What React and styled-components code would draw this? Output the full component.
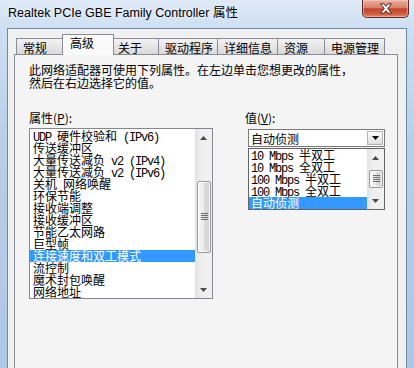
import React from 'react';
import styled, { createGlobalStyle } from 'styled-components';

const Global = createGlobalStyle`
  html, body { margin: 0; padding: 0; }
  body {
    width: 414px; height: 368px; overflow: hidden;
    background: #c4d7ee;
    font-family: "Noto Sans CJK SC", sans-serif;
  }
`;

const CJK = `"Noto Sans CJK SC", "Noto Sans", sans-serif`;

const Window = styled.div`
  width: 414px; height: 368px; overflow: hidden;
  display: flex; flex-direction: column;
  background: linear-gradient(to bottom, #dfeaf7 0px, #cddff2 28px, #b9cfe9 140px, #aec7e4 368px);
`;

const TitleBar = styled.div`
  height: 28px; flex-shrink: 0;
  display: flex; align-items: flex-start; justify-content: space-between;
`;

const Title = styled.div`
  padding: 5px 0 0 8px;
  font-family: "Liberation Sans", ${CJK};
  font-size: 12.5px; line-height: 16px; color: #000;
  text-shadow: 0 0 6px rgba(255,255,255,0.9);
`;

const CloseButton = styled.div`
  width: 47px; height: 18px; margin-right: 5px; box-sizing: border-box;
  border: 1px solid #5e2a24; border-top: none; border-radius: 0 0 5px 5px;
  background: linear-gradient(to bottom, #eab0a2 0%, #d9806b 45%, #c4442c 52%, #cf5a3e 80%, #dd8a6e 100%);
  box-shadow: inset 0 0 0 1px rgba(255,220,210,0.45);
  display: flex; align-items: center; justify-content: center;
`;

const Frame = styled.div`
  flex: 1; min-height: 0; display: flex;
  padding: 0 7px;
  border-left: 2px solid #9fbbdf;
  border-right: 2px solid #9fbbdf;
  margin: 0 -2px;
`;

const Client = styled.div`
  flex: 1; display: flex; flex-direction: column;
  background: #f0f0f0;
  border: 1px solid #6f87a6; border-bottom: none;
  padding: 5px 8px 0 6px;
`;

const TabRow = styled.div`
  display: flex; align-items: flex-end;
  height: 21px; padding-left: 2px;
  margin-bottom: -1px; position: relative; z-index: 1;
`;

const Tab = styled.div`
  box-sizing: border-box;
  width: ${p => p.$w}px;
  height: ${p => (p.$active ? 21 : 17)}px;
  margin: 0 ${p => (p.$active ? -2 : 0)}px;
  padding: ${p => (p.$active ? '1px 0 0 7px' : '2px 0 0 6px')};
  border: 1px solid #898c95;
  border-bottom: ${p => (p.$active ? 'none' : '1px solid #898c95')};
  border-left: ${p => (p.$first || p.$active ? '1px solid #898c95' : 'none')};
  background: ${p => (p.$active ? '#fafafa' : 'linear-gradient(to bottom, #f3f3f3, #e6e6e6 50%, #dadada)')};
  position: relative; z-index: ${p => (p.$active ? 2 : 1)};
  font-family: ${CJK}; font-size: 12px; line-height: 13px; color: #000;
  white-space: nowrap;
`;

const Panel = styled.div`
  height: 340px; flex-shrink: 0;
  border: 1px solid #898c95;
  background: #f4f4f4;
  padding: 8px 0 0 14px;
  font-family: ${CJK}; font-size: 12px; color: #000;
`;

const Description = styled.p`
  margin: 0; font-size: 12px; line-height: 13px; white-space: nowrap;
`;

const Columns = styled.div`
  display: flex; gap: 32px; margin-top: 23px;
`;

const Column = styled.div`
  display: flex; flex-direction: column;
  width: ${p => p.$w}px;
`;

const Label = styled.div`
  font-size: 12px; line-height: 12px;
  margin-bottom: ${p => p.$mb}px;
  u { text-decoration: underline; text-underline-offset: 1px; }
`;

const ListBox = styled.div`
  box-sizing: border-box;
  height: ${p => p.$h}px;
  border: 1px solid ${p => p.$border};
  background: #fff;
  display: flex;
`;

const Items = styled.div`
  flex: 1; min-width: 0; overflow: hidden;
  padding-top: ${p => p.$pt}px;
`;

const Item = styled.div`
  height: 12px; line-height: 12px; font-size: 12px;
  padding-left: ${p => p.$pl}px;
  white-space: nowrap;
  background: ${p => (p.$sel ? '#3399ff' : 'transparent')};
  color: ${p => (p.$sel ? '#fff' : '#000')};
`;

const Latin = styled.span`
  font-family: "Liberation Mono", monospace;
  font-size: 12px; letter-spacing: -1.2px;
`;

const ScrollBar = styled.div`
  width: 17px; flex-shrink: 0;
  display: flex; flex-direction: column;
  background: linear-gradient(to right, #e2e2e2, #efefef 35%, #f2f2f2);
`;

const ScrollArrow = styled.div`
  height: 17px; flex-shrink: 0;
  display: flex; align-items: center; justify-content: center;
`;

const ScrollTrack = styled.div`
  flex: 1; min-height: 0;
`;

const ScrollThumb = styled.div`
  box-sizing: border-box;
  margin: ${p => p.$offset}px 1px 0 2px;
  height: ${p => p.$size}px;
  border: 1px solid #9a9a9a; border-radius: 2px;
  background: linear-gradient(to right, #f6f6f6, #ececec 45%, #dcdcdc 55%, #d2d2d2);
  box-shadow: inset 0 0 0 1px rgba(255,255,255,0.7);
  display: flex; align-items: center; justify-content: center;
`;

const ComboWrap = styled.div`
  position: relative;
  margin-left: 3px;
  width: 137px;
`;

const Combo = styled.div`
  box-sizing: border-box;
  height: 18px;
  border: 1px solid #7a7a7a;
  background: #fff;
  display: flex; align-items: stretch;
`;

const ComboText = styled.div`
  flex: 1; padding: 2px 0 0 2px;
  font-size: 12px; line-height: 13px;
`;

const ComboButton = styled.div`
  box-sizing: border-box;
  width: 16px; margin: 1px;
  border: 1px solid #b4b4b4;
  background: linear-gradient(to bottom, #fdfdfd, #ececec 50%, #dedede);
  display: flex; align-items: center; justify-content: center;
`;

const DropList = styled.div`
  position: absolute; left: 0; top: calc(100% + 1px);
  width: 137px;
`;

const ArrowIcon = ({ up, color = '#4a4a4a', w = 7, h = 4 }) => (
  <svg width={w} height={h} viewBox={`0 0 ${w} ${h}`}>
    <path d={up ? `M0 ${h} L${w / 2} 0 L${w} ${h} Z` : `M0 0 L${w / 2} ${h} L${w} 0 Z`} fill={color} />
  </svg>
);

const Grip = () => (
  <svg width="7" height="8" viewBox="0 0 7 8">
    {[0, 2, 4, 6].map(y => (
      <rect key={y} x="0" y={y} width="7" height="1" fill="#6b6b6b" />
    ))}
  </svg>
);

const CloseIcon = () => (
  <svg width="14" height="11" viewBox="0 0 14 11">
    <path
      d="M1.5 0.8 L5 0.8 L7 3.3 L9 0.8 L12.5 0.8 L8.8 5.5 L12.5 10.2 L9 10.2 L7 7.7 L5 10.2 L1.5 10.2 L5.2 5.5 Z"
      fill="#fff" stroke="#3d1712" strokeWidth="0.9" strokeLinejoin="round"
    />
  </svg>
);

const Mixed = ({ text }) => {
  const parts = text.split(/([\x20-\x7e]+)/).filter(Boolean);
  return parts.map((p, i) => (/^[\x20-\x7e]+$/.test(p) ? <Latin key={i}>{p.replace(/ /g, '\u00a0')}</Latin> : <span key={i}>{p}</span>));
};

const Scroll = ({ thumbOffset, thumbSize }) => (
  <ScrollBar>
    <ScrollArrow><ArrowIcon up /></ScrollArrow>
    <ScrollTrack>
      <ScrollThumb $offset={thumbOffset} $size={thumbSize}><Grip /></ScrollThumb>
    </ScrollTrack>
    <ScrollArrow><ArrowIcon /></ScrollArrow>
  </ScrollBar>
);

const tabs = [
  { label: '常规', w: 48 },
  { label: '高级', w: 52, active: true },
  { label: '关于', w: 47 },
  { label: '驱动程序', w: 59 },
  { label: '详细信息', w: 60 },
  { label: '资源', w: 47 },
  { label: '电源管理', w: 60 },
];

const properties = [
  'UDP 硬件校验和 (IPv6)',
  '传送缓冲区',
  '大量传送减负 v2 (IPv4)',
  '大量传送减负 v2 (IPv6)',
  '关机 网络唤醒',
  '环保节能',
  '接收端调整',
  '接收缓冲区',
  '节能乙太网路',
  '巨型帧',
  '连接速度和双工模式',
  '流控制',
  '魔术封包唤醒',
  '网络地址',
];

const values = ['10 Mbps 半双工', '10 Mbps 全双工', '100 Mbps 半双工', '100 Mbps 全双工', '自动侦测'];

export default function App() {
  return (
    <>
      <Global />
      <Window>
        <TitleBar>
          <Title>Realtek PCIe GBE Family Controller 属性</Title>
          <CloseButton><CloseIcon /></CloseButton>
        </TitleBar>
        <Frame>
          <Client>
            <TabRow>
              {tabs.map((t, i) => (
                <Tab key={t.label} $w={t.w} $active={t.active} $first={i === 0}>{t.label}</Tab>
              ))}
            </TabRow>
            <Panel>
              <Description>
                此网络适配器可使用下列属性。在左边单击您想更改的属性，
                <br />
                然后在右边选择它的值。
              </Description>
              <Columns>
                <Column $w={184}>
                  <Label $mb={4}>属性(<u>P</u>):</Label>
                  <ListBox $h={171} $border="#828790">
                    <Items $pt={1}>
                      {properties.map((p, i) => (
                        <Item key={p} $pl={3} $sel={i === 10}><Mixed text={p} /></Item>
                      ))}
                    </Items>
                    <Scroll thumbOffset={35} thumbSize={72} />
                  </ListBox>
                </Column>
                <Column $w={145}>
                  <Label $mb={5}>值(<u>V</u>):</Label>
                  <ComboWrap>
                    <Combo>
                      <ComboText>自动侦测</ComboText>
                      <ComboButton><ArrowIcon color="#000" w={7} h={4} /></ComboButton>
                    </Combo>
                    <DropList>
                      <ListBox $h={62} $border="#646464">
                        <Items $pt={0}>
                          {values.map((v, i) => (
                            <Item key={v} $pl={2} $sel={i === 4}><Mixed text={v} /></Item>
                          ))}
                        </Items>
                        <Scroll thumbOffset={4} thumbSize={18} />
                      </ListBox>
                    </DropList>
                  </ComboWrap>
                </Column>
              </Columns>
            </Panel>
          </Client>
        </Frame>
      </Window>
    </>
  );
}
